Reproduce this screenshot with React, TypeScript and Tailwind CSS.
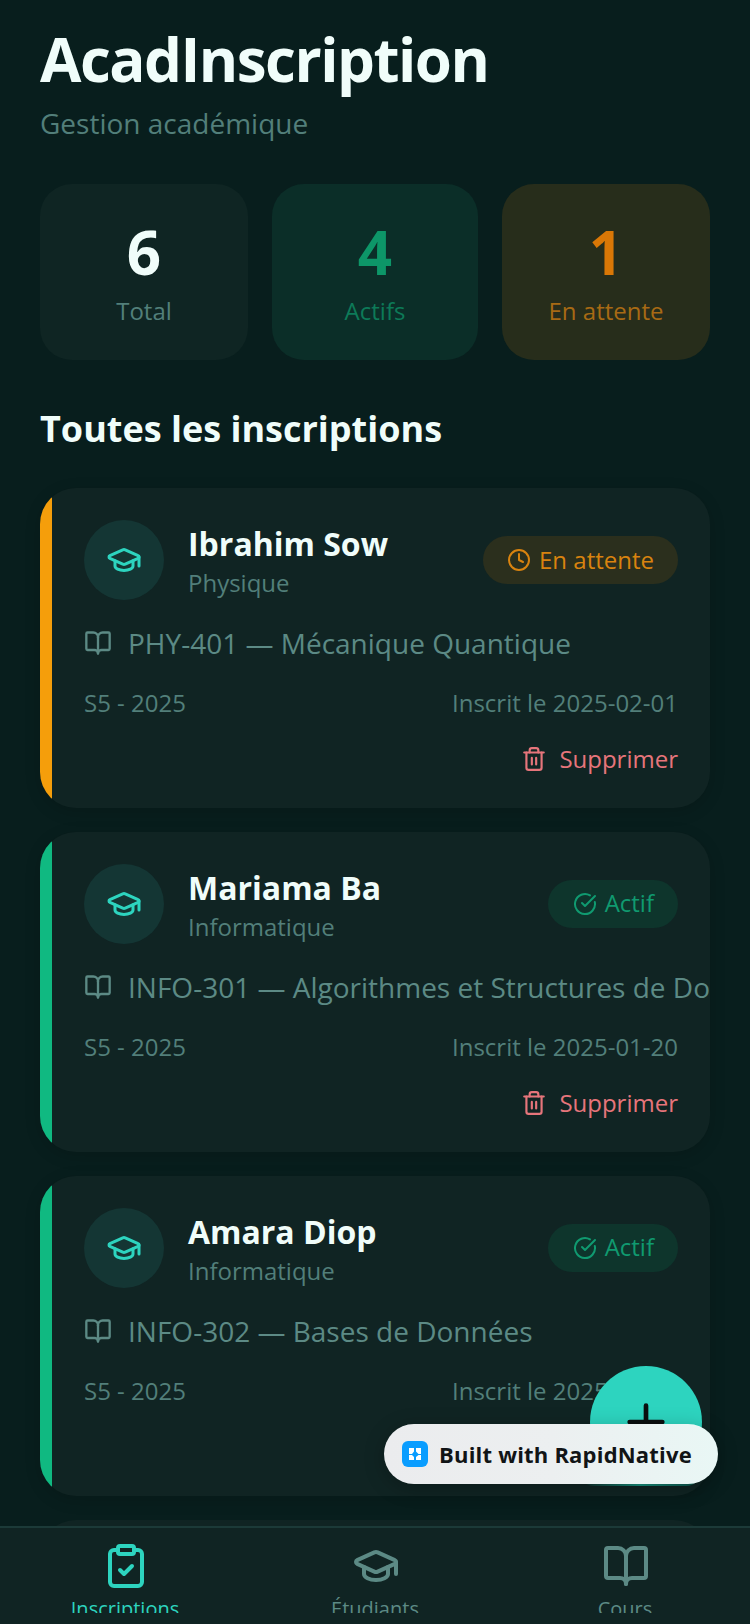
import { BookOpen, CircleCheckBig, Clock, ClipboardCheck, GraduationCap, Plus, Trash2 } from "lucide-react";

type Status = "pending" | "active";

interface Enrollment {
  name: string;
  dept: string;
  course: string;
  term: string;
  date?: string;
  status: Status;
  showDelete: boolean;
}

const enrollments: Enrollment[] = [
  { name: "Ibrahim Sow", dept: "Physique", course: "PHY-401 — Mécanique Quantique", term: "S5 - 2025", date: "Inscrit le 2025-02-01", status: "pending", showDelete: true },
  { name: "Mariama Ba", dept: "Informatique", course: "INFO-301 — Algorithmes et Structures de Données", term: "S5 - 2025", date: "Inscrit le 2025-01-20", status: "active", showDelete: true },
  { name: "Amara Diop", dept: "Informatique", course: "INFO-302 — Bases de Données", term: "S5 - 2025", date: "Inscrit le 2025-01-15", status: "active", showDelete: true },
];

function StatCard({ value, label, bg, valueColor, labelColor }: { value: string; label: string; bg: string; valueColor: string; labelColor: string }) {
  return (
    <div className={`flex h-44 flex-col items-center justify-center rounded-[32px] pb-[2px] ${bg}`}>
      <div className={`text-[60px] leading-[72px] font-bold ${valueColor}`}>{value}</div>
      <div className={`mt-[7px] text-2xl leading-8 ${labelColor}`}>{label}</div>
    </div>
  );
}

function StatusBadge({ status }: { status: Status }) {
  if (status === "pending") {
    return (
      <div className="flex h-12 items-center gap-2 rounded-full bg-[#2b2f1d] px-6 text-2xl text-[#d9830f]">
        <Clock size={24} />
        En attente
      </div>
    );
  }
  return (
    <div className="flex h-12 items-center gap-2 rounded-full bg-[#0e352c] pr-6 pl-[25px] text-2xl text-[#109a70]">
      <CircleCheckBig size={24} />
      <span className="-mt-[2px]">Actif</span>
    </div>
  );
}

function EnrollmentCard({ item }: { item: Enrollment }) {
  return (
    <div className="flex h-80 shrink-0 overflow-hidden rounded-[36px] bg-[#102423] shadow-[0_4px_16px_rgba(0,0,0,0.15)]">
      <div className={`w-3 shrink-0 ${item.status === "pending" ? "bg-[#f59e0b]" : "bg-[#10b981]"}`} />
      <div className="min-w-0 flex-1 py-8 pl-8">
        <div className="flex items-center justify-between pr-8">
          <div className="flex items-center gap-6">
            <div className="flex h-20 w-20 items-center justify-center rounded-full bg-[#143634] text-[#2dd4bf]">
              <GraduationCap size={36} />
            </div>
            <div className="pt-[3px]">
              <div className="text-[32px] leading-10 font-bold text-[#f0fdfa]">{item.name}</div>
              <div className="mt-[3px] text-2xl leading-8 text-[#527f7a]">{item.dept}</div>
            </div>
          </div>
          <StatusBadge status={item.status} />
        </div>
        <div className="mt-[23px] flex items-center gap-4 text-[#5c8a85]">
          <BookOpen size={28} className="shrink-0" />
          <span className="text-[28px] leading-10 whitespace-nowrap">{item.course}</span>
        </div>
        <div className="mt-6 flex items-center justify-between pr-8 text-2xl leading-8 text-[#527f7a]">
          <span>{item.term}</span>
          <span>{item.date}</span>
        </div>
        {item.showDelete && (
          <div className="mt-6 flex items-center justify-end gap-3 pr-8 text-2xl leading-8 text-[#e6757b]">
            <Trash2 size={26} />
            Supprimer
          </div>
        )}
      </div>
    </div>
  );
}

function TabItem({ label, active, children }: { label: string; active?: boolean; children: React.ReactNode }) {
  return (
    <div className={`flex flex-1 flex-col items-center ${active ? "text-[#2dd4bf]" : "text-[#5c8a85]"}`}>
      {children}
      <div className="mt-[5px] h-[18px] overflow-hidden text-xl leading-7">{label}</div>
    </div>
  );
}

export default function App() {
  return (
    <div className="relative flex h-[1624px] w-[750px] flex-col overflow-hidden bg-[#081e1d] font-['Open_Sans','Noto_Sans',sans-serif]">
      <div className="flex min-h-0 flex-1 flex-col overflow-hidden px-10 pt-[21px]">
        <h1 className="text-[60px] leading-[76px] font-bold tracking-[-1.5px] text-[#f0fdfa]">AcadInscription</h1>
        <p className="mt-[6px] text-[28px] leading-10 text-[#527f7a]">Gestion académique</p>

        <div className="mt-[41px] grid grid-cols-[208px_206px_208px] gap-x-6">
          <StatCard value="6" label="Total" bg="bg-[#0f2523]" valueColor="text-[#f0fdfa]" labelColor="text-[#527f7a]" />
          <StatCard value="4" label="Actifs" bg="bg-[#0b2e28]" valueColor="text-[#0d9668]" labelColor="text-[#0d7a58]" />
          <StatCard value="1" label="En attente" bg="bg-[#272d1b]" valueColor="text-[#d97706]" labelColor="text-[#a86a14]" />
        </div>

        <h2 className="mt-[47px] text-4xl leading-[44px] font-bold text-[#f0fdfa]">Toutes les inscriptions</h2>

        <div className="mt-[37px] flex flex-col gap-6">
          {enrollments.map((item) => (
            <EnrollmentCard key={item.name} item={item} />
          ))}
          <div className="h-80 shrink-0 rounded-[36px] bg-[#102423]" />
        </div>
      </div>

      <div className="flex h-[98px] shrink-0 border-t-2 border-[#1c3a38] bg-[#102423] pt-[14px]">
        <TabItem label="Inscriptions" active>
          <ClipboardCheck size={48} className="ml-0.5" />
        </TabItem>
        <TabItem label="Étudiants">
          <GraduationCap size={48} className="ml-0.5" />
        </TabItem>
        <TabItem label="Cours">
          <BookOpen size={48} className="ml-0.5" />
        </TabItem>
      </div>

      {/* floating add button */}
      <div className="absolute top-[1366px] left-[590px] flex h-28 w-28 items-center justify-center rounded-full bg-[#2dd4bf] text-[#0a0f0f]">
        <Plus size={56} />
      </div>

      <div className="absolute top-[1470px] left-[578px] h-4 w-[124px] rounded-b-[40px] bg-gradient-to-r from-transparent via-[#17907c] to-[#0d4f47]" />

      {/* builder badge */}
      <div className="absolute top-[1424px] left-[384px] flex h-[60px] w-[334px] items-center gap-[11px] rounded-full bg-gradient-to-r from-[#ebecee] via-[#eceff0] to-[#e9f7f5] pl-[18px] shadow-[0_4px_20px_rgba(0,0,0,0.25)]">
        <svg width="26" height="26" viewBox="0 0 26 26">
          <rect width="26" height="26" rx="6" fill="#0a9dff" />
          <path d="M7 7h5v3.500L10 13H7zM14 7h5v6h-2.500L14 10.500zM7 14h3l2 2v3H7zM16.500 14H19v5h-5v-3z" fill="#fff" />
        </svg>
        <span className="text-[22px] leading-8 font-bold tracking-[0.2px] whitespace-nowrap text-[#111416]">Built with RapidNative</span>
      </div>
    </div>
  );
}
